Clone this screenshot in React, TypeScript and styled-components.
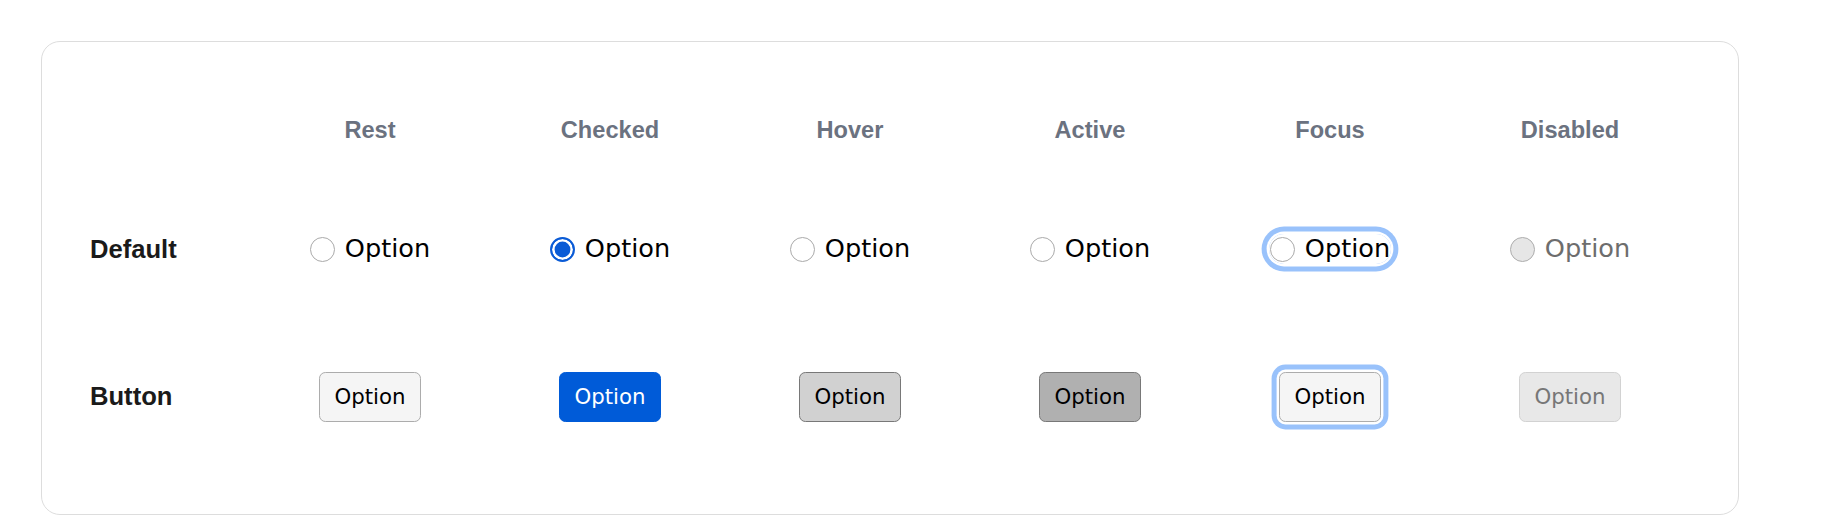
import styled, { createGlobalStyle, css } from 'styled-components'

const GlobalStyle = createGlobalStyle`
  html, body {
    margin: 0;
    padding: 0;
    background: #ffffff;
  }
  body {
    font-family: "Liberation Sans", Arial, sans-serif;
  }
`

const Page = styled.div`
  padding: 41px 41px 0;
`

const Card = styled.section`
  width: fit-content;
  padding: 49px 48px 50px;
  border: 1.6px solid #dddddd;
  border-radius: 19px;
  background: #ffffff;
`

const Grid = styled.div`
  display: grid;
  grid-template-columns: 160px repeat(6, 240px);
  grid-template-rows: 78px 160px 135px;
  align-items: center;
`

const ColumnHead = styled.div`
  text-align: center;
  font-size: 23.6px;
  font-weight: 700;
  color: #6b7280;
`

const RowLabel = styled.div`
  font-size: 25.6px;
  font-weight: 700;
  color: #1a1a1a;
`

const Cell = styled.div`
  display: flex;
  justify-content: center;
  align-items: center;
`

type State = 'rest' | 'checked' | 'hover' | 'active' | 'focus' | 'disabled'

const focusRing = css`
  box-shadow: 0 0 0 2.4px #ffffff, 0 0 0 7.4px #99c2fb;
`

const RadioLabel = styled.label<{ $state: State }>`
  display: inline-flex;
  align-items: center;
  gap: 10px;
  padding: 0 1px;
  border-radius: 18px;
  font-family: "DejaVu Sans", Verdana, sans-serif;
  font-size: 25.6px;
  line-height: 1.164;
  color: ${p => (p.$state === 'disabled' ? '#6d6d6d' : '#000000')};
  ${p => p.$state === 'focus' && focusRing}
`

const Dot = styled.span<{ $state: State }>`
  box-sizing: border-box;
  width: 25px;
  height: 25px;
  border-radius: 50%;
  flex-shrink: 0;
  border: 1.8px solid #aaaaaa;
  background: #ffffff;

  ${p =>
    p.$state === 'checked' &&
    css`
      border: 2.6px solid #0a5bd6;
      background: #0a5bd6;
      box-shadow: inset 0 0 0 2.6px #ffffff;
    `}
  ${p =>
    p.$state === 'disabled' &&
    css`
      background: #e6e6e6;
      border-color: #adadad;
    `}
`

const buttonLook: Record<State, ReturnType<typeof css>> = {
  rest: css`
    background: #f5f5f5;
    border-color: #acacac;
    color: #000;
  `,
  checked: css`
    background: #005bd8;
    border-color: #005bd8;
    color: #fff;
  `,
  hover: css`
    background: #d1d1d1;
    border-color: #787878;
    color: #000;
  `,
  active: css`
    background: #b0b0b0;
    border-color: #787878;
    color: #000;
  `,
  focus: css`
    background: #f5f5f5;
    border-color: #acacac;
    color: #000;
    ${focusRing}
  `,
  disabled: css`
    background: #e8e8e8;
    border-color: #d2d2d2;
    color: #777777;
  `,
}

const ToggleButton = styled.button<{ $state: State }>`
  box-sizing: border-box;
  height: 50px;
  padding: 0 14px;
  border: 1.6px solid;
  border-radius: 6.4px;
  font-family: "DejaVu Sans", Verdana, sans-serif;
  font-size: 21.3px;
  line-height: 1;
  ${p => buttonLook[p.$state]}
`

const states: { key: State; title: string }[] = [
  { key: 'rest', title: 'Rest' },
  { key: 'checked', title: 'Checked' },
  { key: 'hover', title: 'Hover' },
  { key: 'active', title: 'Active' },
  { key: 'focus', title: 'Focus' },
  { key: 'disabled', title: 'Disabled' },
]

export default function App() {
  return (
    <Page>
      <GlobalStyle />
      <Card>
        <Grid>
          <div />
          {states.map(s => (
            <ColumnHead key={s.key}>{s.title}</ColumnHead>
          ))}

          <RowLabel>Default</RowLabel>
          {states.map(s => (
            <Cell key={s.key}>
              <RadioLabel $state={s.key}>
                <Dot $state={s.key} />
                Option
              </RadioLabel>
            </Cell>
          ))}

          <RowLabel>Button</RowLabel>
          {states.map(s => (
            <Cell key={s.key}>
              <ToggleButton $state={s.key} disabled={s.key === 'disabled'}>
                Option
              </ToggleButton>
            </Cell>
          ))}
        </Grid>
      </Card>
    </Page>
  )
}
